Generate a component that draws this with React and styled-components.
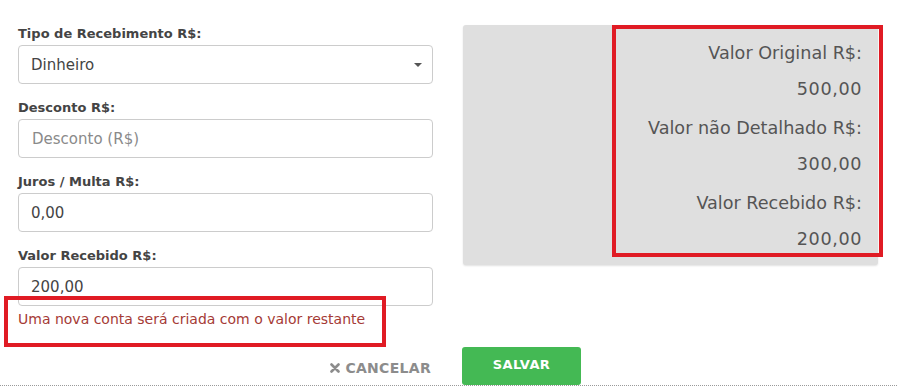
import styled, { createGlobalStyle } from "styled-components";

const GlobalStyle = createGlobalStyle`
  html, body {
    margin: 0;
    padding: 0;
    background: #ffffff;
    font-family: "DejaVu Sans", "Liberation Sans", sans-serif;
  }
`;

const Page = styled.div`
  width: 897px;
  height: 389px;
  overflow: hidden;
  box-sizing: border-box;
`;

const Columns = styled.div`
  display: grid;
  grid-template-columns: 415px 415px;
  column-gap: 30px;
  align-items: start;
  padding: 25px 0 0 18px;
`;

const FormColumn = styled.div`
  padding-top: 1px;
`;

const Field = styled.div`
  margin-bottom: ${(props) => (props.last ? 0 : "16px")};
`;

const Label = styled.div`
  font-size: 13px;
  line-height: 16px;
  font-weight: 700;
  color: #444;
  margin-bottom: 3px;
`;

const InputBox = styled.div`
  position: relative;
  height: 39px;
  box-sizing: border-box;
  border: 1px solid #cccccc;
  border-radius: 4px;
  display: flex;
  align-items: center;
  padding: 0 12px 0 12px;
  font-size: 15px;
  color: ${(props) => (props.placeholder ? "#8a8a8a" : "#444")};
  padding-left: ${(props) => (props.placeholder ? "13px" : "12px")};
`;

const Caret = styled.span`
  position: absolute;
  right: 10px;
  top: 17px;
  width: 0;
  height: 0;
  border-left: 4px solid transparent;
  border-right: 4px solid transparent;
  border-top: 4px solid #555;
`;

const Notice = styled.div`
  position: relative;
  margin-top: 3px;
  font-size: 14px;
  line-height: 20px;
  color: #a53a36;
`;

const Highlight = styled.div`
  position: absolute;
  box-sizing: border-box;
  border: 4px solid #e01b24;
  pointer-events: none;
`;

const NoticeHighlight = styled(Highlight)`
  left: -14px;
  top: -13px;
  width: 382px;
  height: 51px;
`;

const Summary = styled.div`
  position: relative;
  height: 240px;
  box-sizing: border-box;
  background: #dfdfdf;
  border-radius: 3px;
  box-shadow: 0 1px 2px rgba(0, 0, 0, 0.12);
  padding: 10px 16px 8px 16px;
  text-align: right;
  color: #555;
`;

const SummaryItem = styled.div`
  margin-bottom: ${(props) => (props.last ? 0 : "3px")};
`;

const SummaryLine = styled.div`
  font-size: 17.6px;
  line-height: 36px;
  letter-spacing: ${(props) => (props.number ? "0.6px" : "0")};
`;

const SummaryHighlight = styled(Highlight)`
  left: 149px;
  top: 0;
  width: 271px;
  height: 232px;
`;

const Footer = styled.div`
  display: grid;
  grid-template-columns: 415px 415px;
  column-gap: 30px;
  align-items: center;
  margin-top: 18px;
  padding-left: 18px;
  border-bottom: 1px dotted #9a9a9a;
`;

const CancelButton = styled.button`
  justify-self: end;
  margin-right: 2px;
  background: none;
  border: none;
  display: flex;
  align-items: center;
  gap: 5px;
  padding: 4px 0 0 0;
  font-family: inherit;
  font-size: 14px;
  font-weight: 700;
  color: #8c8c8c;
  letter-spacing: 0.3px;
  cursor: pointer;
`;

const SaveButton = styled.button`
  justify-self: start;
  margin-left: -1px;
  width: 119px;
  height: 38px;
  background: #44b954;
  border: none;
  border-radius: 3px;
  color: #ffffff;
  font-family: inherit;
  font-size: 13px;
  font-weight: 700;
  letter-spacing: 0.4px;
  padding-bottom: 4px;
  cursor: pointer;
`;

const fields = [
  { label: "Tipo de Recebimento R$:", value: "Dinheiro", select: true },
  { label: "Desconto R$:", value: "Desconto (R$)", placeholder: true },
  { label: "Juros / Multa R$:", value: "0,00" },
  { label: "Valor Recebido R$:", value: "200,00" },
];

const summary = [
  { label: "Valor Original R$:", value: "500,00" },
  { label: "Valor não Detalhado R$:", value: "300,00" },
  { label: "Valor Recebido R$:", value: "200,00" },
];

const CloseIcon = () => (
  <svg width="10" height="10" viewBox="0 0 10 10">
    <path d="M1.5 1.5 L8.5 8.5 M8.5 1.5 L1.5 8.5" stroke="#8c8c8c" strokeWidth="2.6" strokeLinecap="round" />
  </svg>
);

const App = () => {
  return (
    <Page>
      <GlobalStyle />
      <Columns>
        <FormColumn>
          {fields.map((f, i) => (
            <Field key={f.label} last={i === fields.length - 1}>
              <Label>{f.label}</Label>
              <InputBox placeholder={f.placeholder}>
                {f.value}
                {f.select && <Caret />}
              </InputBox>
            </Field>
          ))}
          <Notice>
            Uma nova conta será criada com o valor restante
            <NoticeHighlight />
          </Notice>
        </FormColumn>
        <Summary>
          {summary.map((s, i) => (
            <SummaryItem key={s.label} last={i === summary.length - 1}>
              <SummaryLine>{s.label}</SummaryLine>
              <SummaryLine number>{s.value}</SummaryLine>
            </SummaryItem>
          ))}
          <SummaryHighlight />
        </Summary>
      </Columns>
      <Footer>
        <CancelButton>
          <CloseIcon />
          CANCELAR
        </CancelButton>
        <SaveButton>SALVAR</SaveButton>
      </Footer>
    </Page>
  );
};

export default App;
